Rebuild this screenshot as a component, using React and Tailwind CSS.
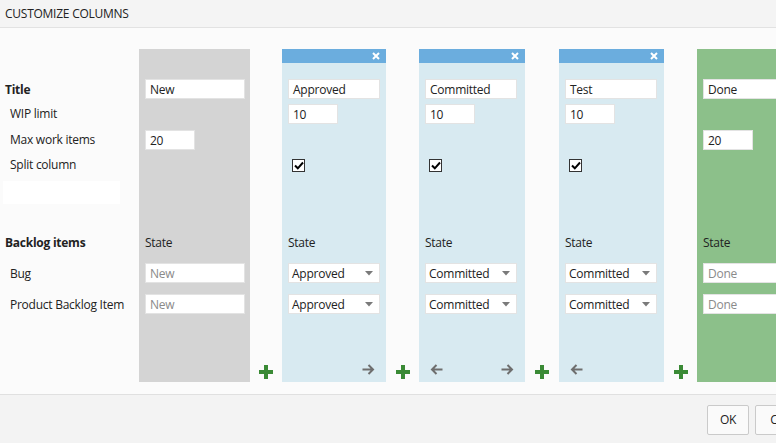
import React from "react";

const font = { fontFamily: '"Open Sans", "Noto Sans", Arial, sans-serif', letterSpacing: "-0.25px" };

function Input({ value, w, muted }) {
  return (
    <div
      className={`h-[20px] bg-white border border-[#e3e3e3] flex items-center pl-[4px] pt-[1px] text-[12px] leading-none ${muted ? "text-[#8a8a8a]" : "text-[#222]"}`}
      style={{ width: w }}
    >
      {value}
    </div>
  );
}

function Select({ value, w }) {
  return (
    <div
      className="h-[20px] bg-white border border-[#e3e3e3] flex items-center justify-between pl-[3px] pr-[6px] pt-[1px] text-[12px] leading-none text-[#222]"
      style={{ width: w }}
    >
      <span>{value}</span>
      <svg width="8" height="5" viewBox="0 0 8 5">
        <path d="M0 0 L8 0 L4 4.5 Z" fill="#7a7a7a" />
      </svg>
    </div>
  );
}

function Check() {
  return (
    <div className="w-[13px] h-[13px] bg-white border border-[#333] flex items-center justify-center">
      <svg width="10" height="9" viewBox="0 0 10 9">
        <path d="M1 4.5 L3.8 7.3 L9 1.5" stroke="#000" strokeWidth="2" fill="none" />
      </svg>
    </div>
  );
}

function Arrow({ dir }) {
  return (
    <svg width="13" height="11" viewBox="0 0 13 11">
      {dir === "right" ? (
        <path d="M0.5 5.5 H11 M6.5 1 L11 5.5 L6.5 10" stroke="#6e6e6e" strokeWidth="2" fill="none" />
      ) : (
        <path d="M12.5 5.5 H2 M6.5 1 L2 5.5 L6.5 10" stroke="#6e6e6e" strokeWidth="2" fill="none" />
      )}
    </svg>
  );
}

function Plus() {
  return (
    <svg width="14" height="14" viewBox="0 0 14 14">
      <path d="M5 0 H9 V5 H14 V9 H9 V14 H5 V9 H0 V5 H5 Z" fill="#3a8a35" />
    </svg>
  );
}

function Column({ kind, width, title, wip, max, split, items, left, right }) {
  const bg =
    kind === "gray" ? "bg-[#d4d4d4]" : kind === "green" ? "bg-[#8cc08a]" : "bg-[#d8eaf1]";
  const muted = kind !== "blue";
  return (
    <div className={`${bg} flex flex-col h-[333px] shrink-0`} style={{ width }}>
      <div className={`h-[14px] flex items-center justify-end pr-[6px] ${kind === "blue" ? "bg-[#6badde]" : ""}`}>
        {kind === "blue" && (
          <svg width="8" height="8" viewBox="0 0 8 8">
            <path d="M1 1 L7 7 M7 1 L1 7" stroke="#fff" strokeWidth="2" />
          </svg>
        )}
      </div>
      <div className="pl-[6px] flex flex-col">
        <div className="mt-[16px] h-[20px]">
          <Input value={title} w={kind === "gray" ? 100 : 92} />
        </div>
        <div className="mt-[5px] h-[20px]">{wip && <Input value={wip} w={50} />}</div>
        <div className="mt-[6px] h-[20px]">{max && <Input value={max} w={50} />}</div>
        <div className="mt-[5px] h-[20px] flex items-center pl-[4px]">{split && <Check />}</div>
        <div className="mt-[58px] h-[20px] flex items-center text-[12px] text-[#222]">State</div>
        <div className="mt-[10px] h-[20px]">
          {muted ? <Input value={items} w={kind === "gray" ? 100 : 92} muted /> : <Select value={items} w={92} />}
        </div>
        <div className="mt-[11px] h-[20px]">
          {muted ? <Input value={items} w={kind === "gray" ? 100 : 92} muted /> : <Select value={items} w={92} />}
        </div>
      </div>
      <div className="flex-1" />
      <div className="h-[24px] flex items-start justify-between px-[11px] pt-[6px]">
        <div>{left && <Arrow dir="left" />}</div>
        <div>{right && <Arrow dir="right" />}</div>
      </div>
    </div>
  );
}

function Gap({ width }) {
  return (
    <div className="h-[333px] flex flex-col justify-end items-center pb-[3px] shrink-0" style={{ width }}>
      <Plus />
    </div>
  );
}

export default function App() {
  return (
    <div className="w-[776px] h-[443px] overflow-hidden bg-[#fbfbfb]" style={font}>
      <div className="w-[830px] h-[443px] flex flex-col">
        <div className="h-[28px] shrink-0 bg-[#f4f4f4] border-b border-[#e2e2e2] flex items-center pl-[5px] text-[12px] text-[#222]">
          CUSTOMIZE COLUMNS
        </div>
        <div className="h-[366px] shrink-0 flex pt-[21px] bg-[#fbfbfb]">
          <div className="w-[139px] shrink-0 flex flex-col text-[12px] text-[#222]">
            <div className="mt-[30px] h-[20px] flex items-center pl-[5px] pt-[1px] font-bold">Title</div>
            <div className="mt-[5px] h-[20px] flex items-center pl-[10px]">WIP limit</div>
            <div className="mt-[6px] h-[20px] flex items-center pl-[10px]">Max work items</div>
            <div className="mt-[5px] h-[20px] flex items-center pl-[10px]">Split column</div>
            <div className="mt-[6px] ml-[3px] w-[117px] h-[23px] bg-white" />
            <div className="mt-[29px] h-[20px] flex items-center pl-[5px] font-bold">Backlog items</div>
            <div className="mt-[10px] h-[20px] flex items-center pl-[10px] pt-[1px]">Bug</div>
            <div className="mt-[11px] h-[20px] flex items-center pl-[10px] pt-[1px]">Product Backlog Item</div>
          </div>
          <Column kind="gray" width={111} title="New" max="20" items="New" />
          <Gap width={32} />
          <Column kind="blue" width={104} title="Approved" wip="10" split items="Approved" right />
          <Gap width={33} />
          <Column kind="blue" width={106} title="Committed" wip="10" split items="Committed" left right />
          <Gap width={34} />
          <Column kind="blue" width={105} title="Test" wip="10" split items="Committed" left />
          <Gap width={33} />
          <Column kind="green" width={120} title="Done" max="20" items="Done" />
        </div>
        <div className="flex-1 bg-[#f3f3f3] border-t border-[#e0e0e0] flex justify-end items-start gap-[6px] pr-[9px] pt-[10px]">
          <button className="w-[42px] h-[30px] bg-[#fafafa] border border-[#cacaca] rounded-[2px] text-[12px] text-[#222]">OK</button>
          <button className="w-[66px] h-[30px] bg-[#fafafa] border border-[#cacaca] rounded-[2px] text-[12px] text-[#222]">Cancel</button>
        </div>
      </div>
    </div>
  );
}
